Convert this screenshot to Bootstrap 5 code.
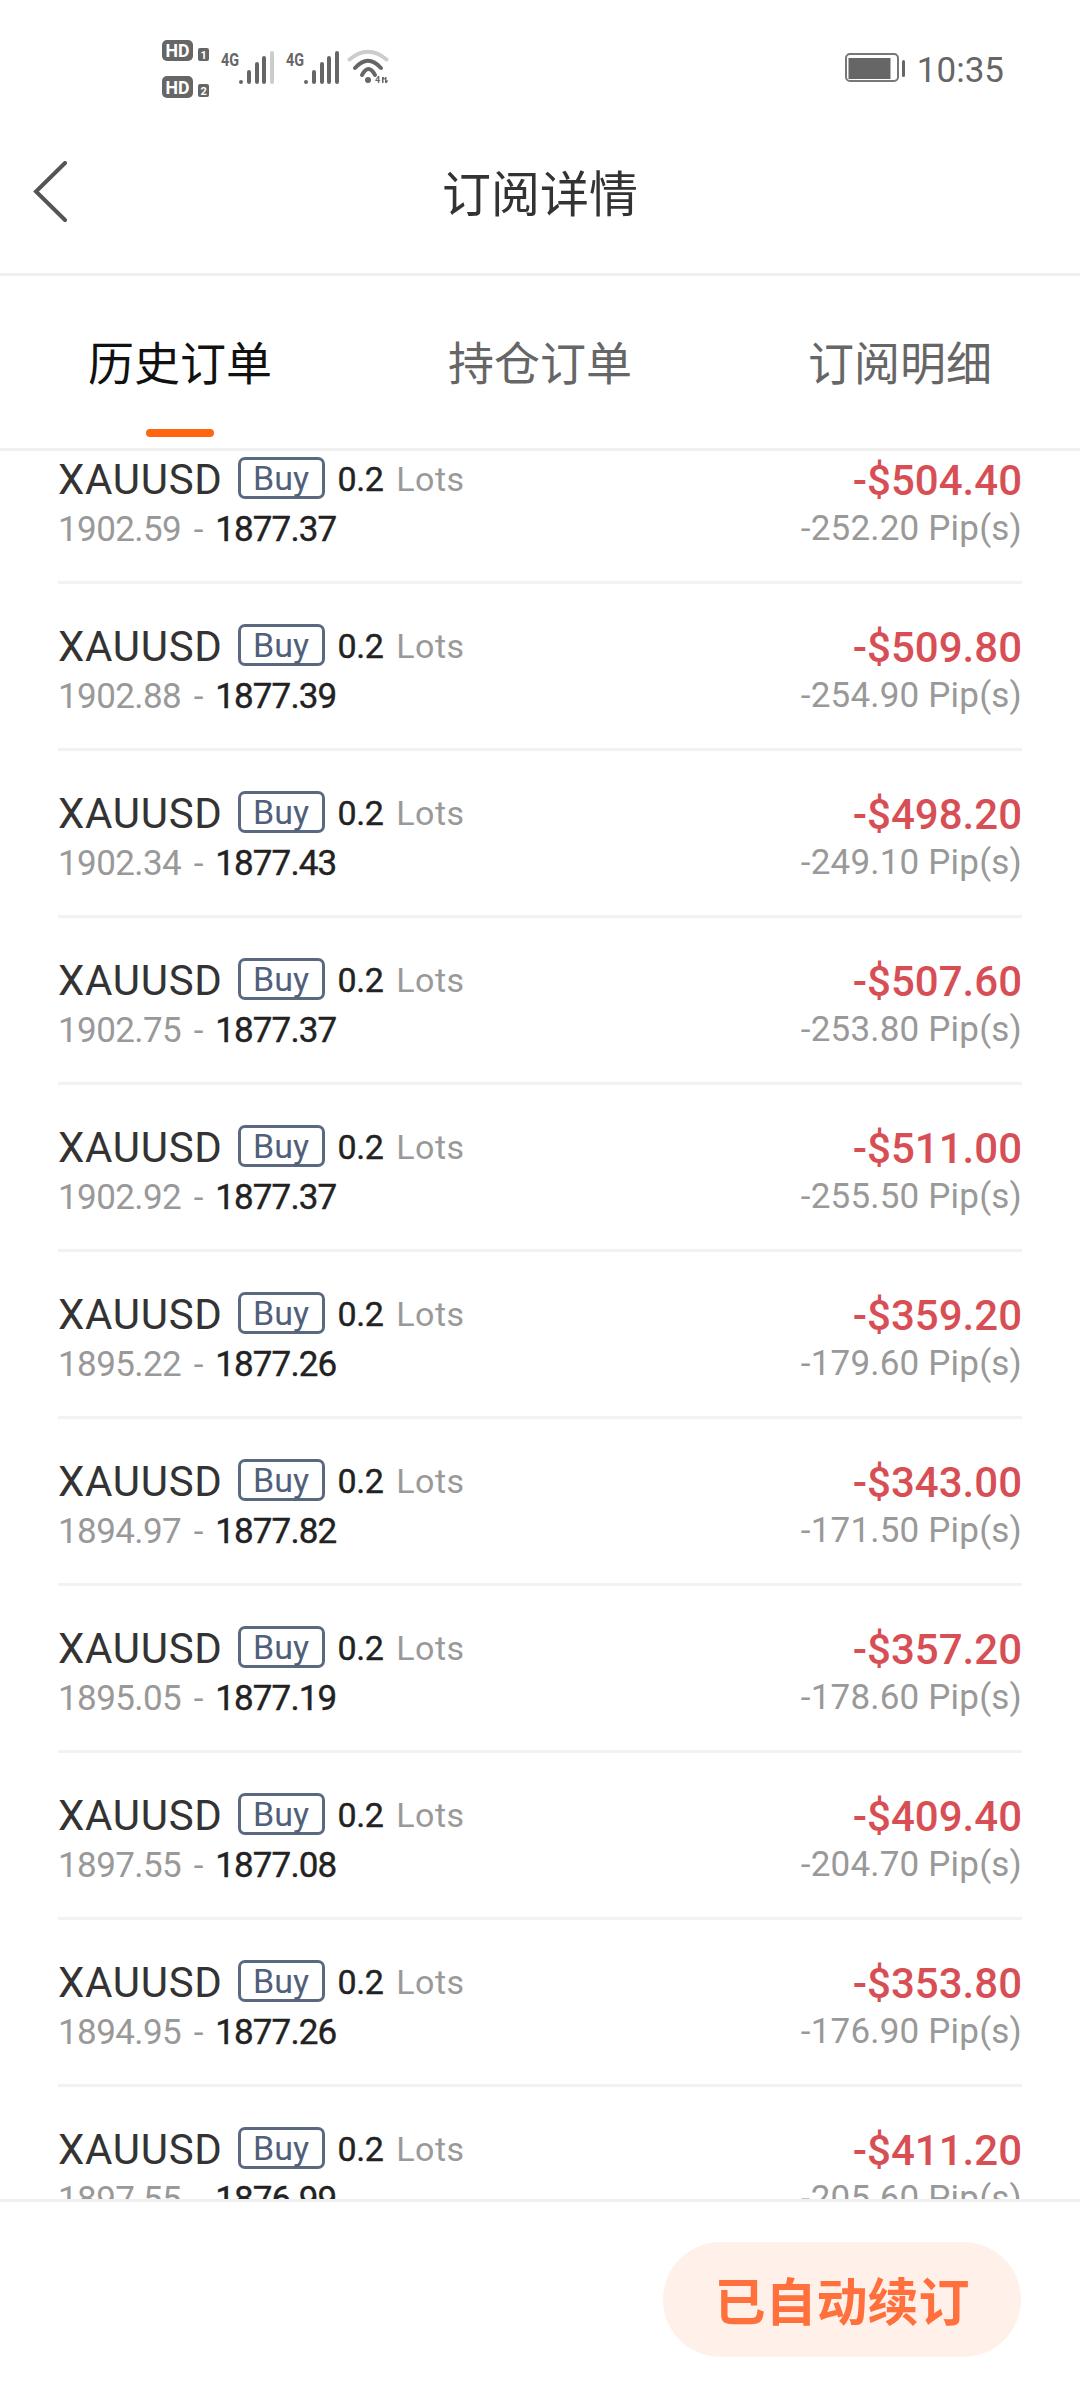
<!DOCTYPE html>
<html lang="zh">
<head>
    <meta charset="UTF-8">
    <meta name="viewport" content="width=device-width, initial-scale=1.0">
    <title>订阅详情</title>
    <link href="https://cdn.jsdelivr.net/npm/bootstrap@5.3.0/dist/css/bootstrap.min.css" rel="stylesheet">
    <style>
        html, body { height: 2400px; overflow: hidden; background: #fff; }
        body { font-family: "Noto Sans CJK SC", "Liberation Sans", sans-serif; }
        .pantalla { height: 2400px; }
        .barra-estado { height: 134px; padding: 40px 76px 0 162px; color: #666; }
        .grupo-hora { margin-top: 13px; gap: 12px; }
        .hora { font-family: Roboto, sans-serif; font-size: 35px; line-height: 1; color: #666; }
        .cabecera { height: 142px; border-bottom: 3px solid #f0f0f0; padding-bottom: 24px; }
        .cabecera h1 { font-size: 49px; font-weight: 400; color: #333; margin: 0; }
        .atras { left: 32px; top: 27px; }
        .pestanas { height: 175px; border-bottom: 3px solid #f0f0f0; }
        .pestana { width: 360px; font-size: 46px; color: #666; padding-top: 50px; }
        .pestana.activa { color: #111; }
        .pestana.activa::after { content: ""; position: absolute; left: 146px; top: 153px; width: 68px; height: 8px; border-radius: 4px; background: #ff660f; }
        .lista { flex: 1 1 0; overflow: hidden; padding: 0 58px; }
        .fila { height: 167px; padding-top: 40px; border-bottom: 3px solid #f2f2f2; font-family: Roboto, sans-serif; }
        .fila:first-child { height: 133px; padding-top: 6px; }
        .linea-top { height: 42px; }
        .simbolo { font-size: 42px; line-height: 42px; margin-top: 4px; letter-spacing: .7px; color: #333; }
        .etiqueta { width: 87px; height: 42px; margin: 0 13px 0 15px; font-size: 34px; line-height: 36px; text-align: center; border: 3px solid #5a6880; border-radius: 7px; color: #51607a; }
        .lotes { font-size: 34px; line-height: 42px; margin-top: 2px; letter-spacing: .5px; color: #999; }
        .lotes b { color: #222; font-weight: 400; -webkit-text-stroke: .4px #222; letter-spacing: -.5px; margin-right: 13px; }
        .precios { font-size: 35px; line-height: 40px; margin-top: 11px; letter-spacing: -.6px; word-spacing: 4.5px; color: #999; }
        .precios b { color: #222; font-weight: 400; -webkit-text-stroke: .4px #222; letter-spacing: -.9px; }
        .col-derecha { margin-top: -2px; }
        .importe { font-size: 42px; line-height: 52px; font-weight: 500; color: #d74f55; }
        .pips { font-size: 35px; line-height: 40px; margin-top: 2px; letter-spacing: .2px; color: #999; }
        .pie { height: 201px; border-top: 3px solid #f0f0f0; padding: 40px 59px 0 0; background: #fff; }
        .renovar { width: 358px; height: 115px; border-radius: 58px; background: #fff0ea; color: #ff703d; font-size: 51px; font-weight: 700; border: 0; padding: 0; }
    </style>
</head>
<body>
    <div class="pantalla d-flex flex-column">
        <div class="barra-estado d-flex align-items-start justify-content-between">
            <svg width="230" height="64" viewBox="0 0 230 64">
                <g fill="#666">
                    <rect x="0" y="0" width="31" height="21" rx="5"/>
                    <rect x="0" y="36" width="31" height="22" rx="5"/>
                    <rect x="36" y="8" width="11" height="13" rx="2"/>
                    <rect x="36" y="44" width="11" height="13" rx="2"/>
                    <text x="59" y="26" font-family="Roboto, sans-serif" font-size="19" font-weight="700" textLength="18" lengthAdjust="spacingAndGlyphs">4G</text>
                    <text x="124" y="26" font-family="Roboto, sans-serif" font-size="19" font-weight="700" textLength="18" lengthAdjust="spacingAndGlyphs">4G</text>
                    <circle cx="206" cy="40" r="3"/>
                    <text x="213" y="43" font-family="Roboto, sans-serif" font-size="9" font-weight="700">4</text>
                    <path d="M220 43v-6h1.5l2 2.5h-2V43zM223 37v6h1.5l2-2.5h-2V37z"/>
                </g>
                <g fill="#fff" font-family="Roboto, sans-serif" font-weight="700">
                    <text x="3.5" y="17" font-size="18" textLength="24" lengthAdjust="spacingAndGlyphs">HD</text>
                    <text x="3.5" y="54" font-size="18" textLength="24" lengthAdjust="spacingAndGlyphs">HD</text>
                    <text x="38.5" y="19" font-size="11">1</text>
                    <text x="38.5" y="55" font-size="11">2</text>
                </g>
                <g fill="none" stroke="#666" stroke-width="4" stroke-linecap="round">
                    <path d="M79 42v0M87 42v-10M95 42v-18M102 42v-24"/>
                    <path d="M110 42V13" stroke="#ccc"/>
                    <path d="M144 42v0M152 42v-10M160 42v-18M167 42v-24M175 42V13"/>
                    <path d="M187.5 19.5Q206 4 224.5 19.5" stroke="#ccc"/>
                    <path d="M193 28Q206 13.5 219 28"/>
                    <path d="M200 35Q206.5 23 213 35"/>
                </g>
            </svg>
            <div class="grupo-hora d-flex align-items-start">
                <svg width="60" height="30" viewBox="0 0 60 30">
                    <rect x="1" y="1" width="52" height="27" rx="4" fill="none" stroke="#777" stroke-width="2"/>
                    <rect x="3.500" y="5" width="42" height="21" fill="#666"/>
                    <rect x="57" y="7" width="3" height="17" rx="1.500" fill="#666"/>
                </svg>
                <span class="hora">10:35</span>
            </div>
        </div>

        <div class="cabecera position-relative d-flex align-items-center justify-content-center">
            <svg class="atras position-absolute" width="40" height="66" viewBox="0 0 40 66">
                <path d="M33 2 4 30.500 33 59" fill="none" stroke="#555" stroke-width="4" stroke-linecap="round"/>
            </svg>
            <h1>订阅详情</h1>
        </div>

        <div class="pestanas d-flex">
            <div class="pestana activa position-relative text-center">历史订单</div>
            <div class="pestana text-center">持仓订单</div>
            <div class="pestana text-center">订阅明细</div>
        </div>

        <div class="lista" id="lista"></div>

        <div class="pie d-flex justify-content-end">
            <button type="button" class="btn renovar">已自动续订</button>
        </div>
    </div>

    <script src="https://cdn.jsdelivr.net/npm/bootstrap@5.3.0/dist/js/bootstrap.bundle.min.js"></script>
    <script>
        const ordenes = [
            ['1902.59', '1877.37', '504.40', '252.20'],
            ['1902.88', '1877.39', '509.80', '254.90'],
            ['1902.34', '1877.43', '498.20', '249.10'],
            ['1902.75', '1877.37', '507.60', '253.80'],
            ['1902.92', '1877.37', '511.00', '255.50'],
            ['1895.22', '1877.26', '359.20', '179.60'],
            ['1894.97', '1877.82', '343.00', '171.50'],
            ['1895.05', '1877.19', '357.20', '178.60'],
            ['1897.55', '1877.08', '409.40', '204.70'],
            ['1894.95', '1877.26', '353.80', '176.90'],
            ['1897.55', '1876.99', '411.20', '205.60']
        ];

        const lista = document.getElementById('lista');
        ordenes.forEach(o => {
            const fila = document.createElement('div');
            fila.className = 'fila d-flex justify-content-between align-items-start';
            fila.innerHTML = `
                <div>
                    <div class="linea-top d-flex align-items-center">
                        <span class="simbolo">XAUUSD</span>
                        <span class="etiqueta">Buy</span>
                        <span class="lotes"><b>0.2</b>Lots</span>
                    </div>
                    <div class="precios">${o[0]} - <b>${o[1]}</b></div>
                </div>
                <div class="col-derecha text-end">
                    <div class="importe">-$${o[2]}</div>
                    <div class="pips">-${o[3]} Pip(s)</div>
                </div>`;
            lista.appendChild(fila);
        });
    </script>
</body>
</html>
